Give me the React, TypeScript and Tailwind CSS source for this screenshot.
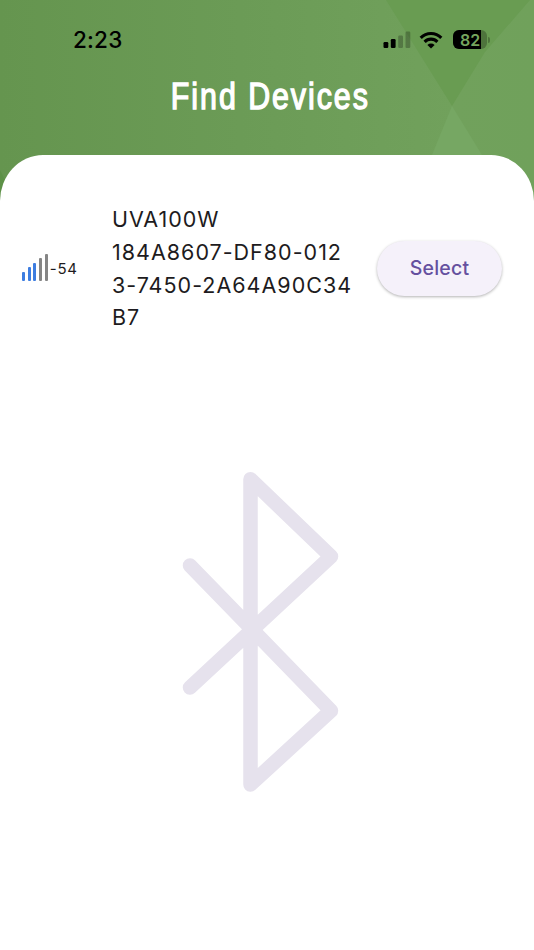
const signalBars = [
  { height: 'h-[9px]', color: 'bg-[#3d7de0]' },
  { height: 'h-[14px]', color: 'bg-[#3d7de0]' },
  { height: 'h-[18px]', color: 'bg-[#3d7de0]' },
  { height: 'h-[23px]', color: 'bg-[#858585]' },
  { height: 'h-[27px]', color: 'bg-[#858585]' },
];

const HeaderPattern = () => (
  <svg className="absolute inset-0 w-full h-[210px]" viewBox="0 0 534 210" aria-hidden="true">
    <defs>
      <linearGradient id="header" x1="0" y1="0" x2="1" y2="0">
        <stop offset="0" stopColor="#65954f" />
        <stop offset="0.45" stopColor="#6b9b56" />
        <stop offset="0.85" stopColor="#71a15c" />
        <stop offset="1" stopColor="#70a15b" />
      </linearGradient>
    </defs>
    <rect width="534" height="210" fill="url(#header)" />
    <path d="M386 0H530L485 52L452 106Z" fill="#699c52" />
    <path d="M452 106L482 155V160H430L432 155Z" fill="#76a763" />
    <path d="M0 170L8 186L0 210Z" fill="#5d9147" />
  </svg>
);

const StatusBar = () => (
  <div className="relative flex items-center justify-between h-[80px] pl-[73px] pr-[44px] text-black">
    <span className="text-[22.5px] leading-none font-medium tracking-[0.2px]">2:23</span>
    <div className="flex items-center">
      <svg width="28" height="18" viewBox="0 0 28 18" aria-hidden="true">
        <rect x="0.5" y="11" width="4.8" height="6" rx="1.2" />
        <rect x="7.8" y="8" width="4.8" height="9" rx="1.2" />
        <rect x="15.2" y="4.5" width="4.8" height="12.5" rx="1.2" opacity="0.25" />
        <rect x="22.5" y="0.5" width="4.8" height="16.5" rx="1.2" opacity="0.25" />
      </svg>
      <svg className="ml-[8px] -mt-px" width="24" height="18" viewBox="0 0 24 18" fill="none" stroke="currentColor" strokeWidth="3.1" aria-hidden="true">
        <path d="M1.7 6.8a14.5 14.5 0 0 1 20.6 0" />
        <path d="M5.6 10.8a9 9 0 0 1 12.8 0" />
        <path d="M12 17.4L8.4 13.9a5.1 5.1 0 0 1 7.2 0Z" fill="currentColor" stroke="none" />
      </svg>
      <div className="relative ml-[10px] -mt-px w-[34px] h-[19px] rounded-[6px] overflow-hidden bg-[#4e743c]">
        <div className="absolute inset-y-0 left-0 w-[28px] bg-black" />
        <span className="absolute inset-0 flex items-center justify-center text-[16px] leading-none font-semibold text-[#76a65e]">82</span>
      </div>
      <div className="ml-[1px] w-[2px] h-[6px] rounded-r-full bg-[#4e743c]" />
    </div>
  </div>
);

const DeviceRow = () => (
  <div className="flex items-center pt-[48px] pl-[22px] pr-[32px]">
    <div className="flex items-center w-[90px] -mt-px">
      <div className="flex items-end gap-[2.7px] h-[27px] -mt-[2px]">
        {signalBars.map((bar, i) => (
          <div key={i} className={`w-[3px] rounded-[1px] ${bar.height} ${bar.color}`} />
        ))}
      </div>
      <span className="ml-[2px] text-[15px] leading-none tracking-[0.8px]">-54</span>
    </div>
    <div className="w-[265px] text-[21.5px] leading-[32.8px] tracking-[1px] whitespace-nowrap">
      <p>UVA100W</p>
      <p>
        184A8607-DF80-012
        <br />
        3-7450-2A64A90C34
        <br />
        B7
      </p>
    </div>
    <button className="w-[125px] h-[55px] -mt-px pt-[2px] rounded-full bg-[#f5f1fa] text-[19.5px] font-[450] tracking-[0.2px] text-[#65509f] shadow-[0_1px_3px_rgba(0,0,0,0.3)]">
      Select
    </button>
  </div>
);

const BluetoothMark = () => (
  <svg
    className="mt-[136px] ml-[180px]"
    width="160"
    height="324"
    viewBox="180 470 160 324"
    fill="none"
    stroke="#e6e2ed"
    strokeWidth="14.5"
    strokeLinecap="round"
    strokeLinejoin="round"
    aria-hidden="true"
  >
    <path d="M190 565.5L331 710.7L250.5 784.5V479.2L331 556.5L190 687.5" />
  </svg>
);

export default function App() {
  return (
    <div className="relative w-[534px] h-[950px] overflow-hidden bg-white font-['Inter',sans-serif] text-[#1d1b20]">
      <HeaderPattern />
      <StatusBar />
      <header className="relative flex justify-center h-[75px] pl-[7px]">
        <h1 className="mt-[-5px] scale-x-[0.82] whitespace-nowrap font-['Liberation_Sans',sans-serif] text-[37px] leading-[44px] font-normal tracking-[2.4px] text-white [-webkit-text-stroke:1.4px_white] [stroke-linejoin:round]">
          Find Devices
        </h1>
      </header>
      <main className="relative h-[795px] bg-white [border-top-left-radius:43px_46px] [border-top-right-radius:43px_46px]">
        <DeviceRow />
        <BluetoothMark />
      </main>
    </div>
  );
}
